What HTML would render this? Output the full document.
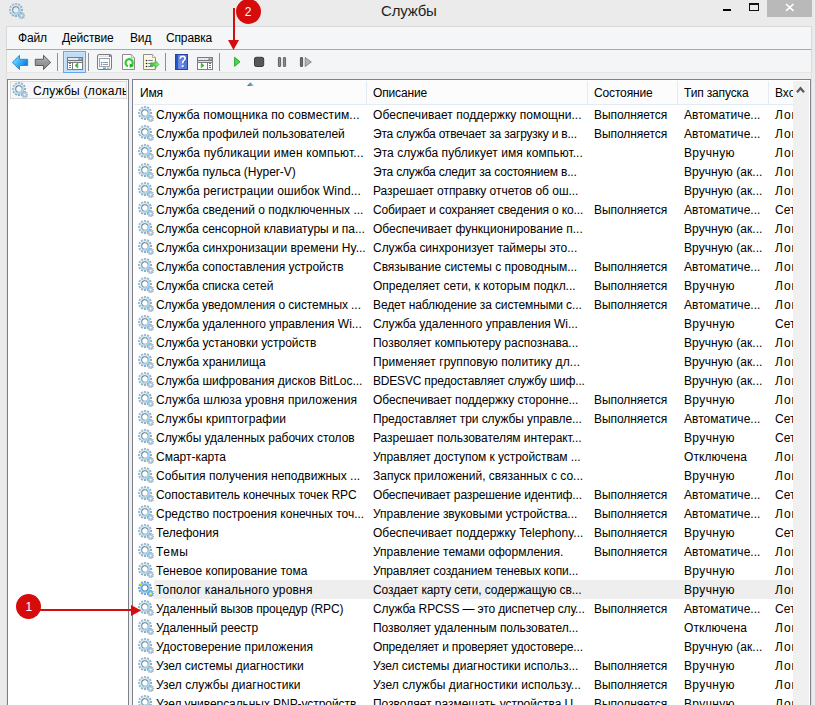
<!DOCTYPE html>
<html><head><meta charset="utf-8">
<style>
* { margin:0; padding:0; box-sizing:border-box; }
html,body { width:815px; height:705px; overflow:hidden; background:#ebebeb; }
body { position:relative; font-family:"Liberation Sans", sans-serif; font-size:12px; color:#000; }
.abs { position:absolute; }
#title { position:absolute; left:381px; top:2px; font-size:15px; color:#1e1e1e; letter-spacing:-0.2px; }
#menubar { position:absolute; left:6px; top:26px; width:806px; height:24px; background:#f5f6f7; border:1px solid #d9d9d9; border-bottom:1px solid #a9aaac; }
.mi { position:absolute; top:4px; letter-spacing:-0.15px; color:#000; }
#toolbar { position:absolute; left:6px; top:50px; width:806px; height:23px; background:#f4f5f7; border-left:1px solid #d9d9d9; border-right:1px solid #d9d9d9; border-bottom:1px solid #e4e5e7; }
#band { position:absolute; left:6px; top:73px; width:806px; height:632px; background:#efefef; border-left:1px solid #e0e0e0; border-right:1px solid #e0e0e0; }
.sep { position:absolute; top:53px; width:1px; height:18px; background:#8e9094; }
#lpane { position:absolute; left:7px; top:79px; width:122px; height:640px; background:#fff; border:1px solid #7b8089; }
#rpane { position:absolute; left:132px; top:79px; width:679px; height:640px; background:#fff; border:1px solid #7b8089; }
#hdr { position:absolute; left:133px; top:80px; width:660px; height:25px; background:#fcfcfd; border-bottom:1px solid #ffffff; }
.hs { position:absolute; top:81px; width:1px; height:23px; background:#e3ebf5; }
.ht { position:absolute; top:86px; letter-spacing:-0.15px; color:#000; }
#vsb { position:absolute; left:793px; top:81px; width:16px; height:625px; background:#f0f0f0; }
.row { position:absolute; left:133px; width:660px; height:19px; overflow:hidden; white-space:nowrap; }
.row.hov { background:transparent; }
.row.hov::before { content:""; position:absolute; left:21px; top:0; width:639px; height:19px; background:#eeeeee; }
.row span { position:absolute; top:3px; transform-origin:0 0; }
.gi { position:absolute; left:5px; top:1px; }
.c1 { left:23px; }
.c2 { left:240px; }
.c3 { left:461px; }
.c4 { left:551px; }
.c5 { left:642px; letter-spacing:1px; }
#hdrline { position:absolute; left:134px; top:104px; width:659px; height:1px; background:#e3ebf5; }
</style></head><body>

<svg width="0" height="0" style="position:absolute">
<defs>
<linearGradient id="gb" x1="0" y1="0" x2="1" y2="1">
<stop offset="0" stop-color="#e4f4fb"/>
<stop offset="0.5" stop-color="#c6e9f7"/>
<stop offset="1" stop-color="#8cc3ea"/>
</linearGradient>
<linearGradient id="gr" x1="0" y1="0" x2="1" y2="1">
<stop offset="0" stop-color="#5f6a75"/>
<stop offset="0.6" stop-color="#8a97a3"/>
<stop offset="1" stop-color="#c4dbe8"/>
</linearGradient>
<linearGradient id="gt" x1="0" y1="0" x2="1" y2="1">
<stop offset="0" stop-color="#a9c3d6"/>
<stop offset="1" stop-color="#7fa3c0"/>
</linearGradient>
<mask id="gm" maskUnits="userSpaceOnUse" x="0" y="0" width="16" height="16"><rect width="16" height="16" fill="#fff"/><circle cx="6.9" cy="6.9" r="2.5" fill="#000"/><circle cx="12.6" cy="12.6" r="0.9" fill="#000"/></mask>
<symbol id="gear" viewBox="0 0 16 16">
<g mask="url(#gm)">
<path d="M12.20,5.95 L14.01,5.89 L14.01,8.11 L12.20,8.05 L12.02,8.69 L13.63,9.54 L12.52,11.47 L10.98,10.50 L10.50,10.98 L11.47,12.52 L9.54,13.63 L8.69,12.02 L8.05,12.20 L8.11,14.01 L5.89,14.01 L5.95,12.20 L5.31,12.02 L4.46,13.63 L2.53,12.52 L3.50,10.98 L3.02,10.50 L1.48,11.47 L0.37,9.54 L1.98,8.69 L1.80,8.05 L-0.01,8.11 L-0.01,5.89 L1.80,5.95 L1.98,5.31 L0.37,4.46 L1.48,2.53 L3.02,3.50 L3.50,3.02 L2.53,1.48 L4.46,0.37 L5.31,1.98 L5.95,1.80 L5.89,-0.01 L8.11,-0.01 L8.05,1.80 L8.69,1.98 L9.54,0.37 L11.47,1.48 L10.50,3.02 L10.98,3.50 L12.52,2.53 L13.63,4.46 L12.02,5.31 Z" fill="url(#gt)"/>
<circle cx="7" cy="7" r="5.3" fill="url(#gb)"/>
<circle cx="6.9" cy="6.9" r="3.1" fill="none" stroke="url(#gr)" stroke-width="1.1"/>
<path d="M15.11,11.92 L16.13,11.91 L16.13,13.29 L15.11,13.28 L14.96,13.69 L15.75,14.35 L14.87,15.40 L14.08,14.73 L13.71,14.95 L13.89,15.96 L12.54,16.20 L12.36,15.19 L11.94,15.11 L11.43,16.00 L10.24,15.32 L10.76,14.43 L10.48,14.10 L9.51,14.45 L9.04,13.16 L10.01,12.82 L10.01,12.38 L9.04,12.04 L9.51,10.75 L10.48,11.10 L10.76,10.77 L10.24,9.88 L11.43,9.20 L11.94,10.09 L12.36,10.01 L12.54,9.00 L13.89,9.24 L13.71,10.25 L14.08,10.47 L14.87,9.80 L15.75,10.85 L14.96,11.51 Z" fill="#98b6cc"/>
<circle cx="12.6" cy="12.6" r="2.1" fill="#cde3ef"/>
<circle cx="12.6" cy="12.6" r="1.3" fill="none" stroke="#8ea9bd" stroke-width="0.6"/>
</g>
</symbol>
<symbol id="gearh" viewBox="0 0 16 16">
<path d="M12.20,5.95 L14.01,5.89 L14.01,8.11 L12.20,8.05 L12.02,8.69 L13.63,9.54 L12.52,11.47 L10.98,10.50 L10.50,10.98 L11.47,12.52 L9.54,13.63 L8.69,12.02 L8.05,12.20 L8.11,14.01 L5.89,14.01 L5.95,12.20 L5.31,12.02 L4.46,13.63 L2.53,12.52 L3.50,10.98 L3.02,10.50 L1.48,11.47 L0.37,9.54 L1.98,8.69 L1.80,8.05 L-0.01,8.11 L-0.01,5.89 L1.80,5.95 L1.98,5.31 L0.37,4.46 L1.48,2.53 L3.02,3.50 L3.50,3.02 L2.53,1.48 L4.46,0.37 L5.31,1.98 L5.95,1.80 L5.89,-0.01 L8.11,-0.01 L8.05,1.80 L8.69,1.98 L9.54,0.37 L11.47,1.48 L10.50,3.02 L10.98,3.50 L12.52,2.53 L13.63,4.46 L12.02,5.31 Z" fill="#6ea7da"/>
<circle cx="7" cy="7" r="5.3" fill="#9fd2f4"/>
<circle cx="6.9" cy="6.9" r="3.1" fill="none" stroke="#5f95c4" stroke-width="1.2"/>
<circle cx="6.9" cy="6.9" r="2.4" fill="#ffffff"/>
<path d="M15.11,11.92 L16.13,11.91 L16.13,13.29 L15.11,13.28 L14.96,13.69 L15.75,14.35 L14.87,15.40 L14.08,14.73 L13.71,14.95 L13.89,15.96 L12.54,16.20 L12.36,15.19 L11.94,15.11 L11.43,16.00 L10.24,15.32 L10.76,14.43 L10.48,14.10 L9.51,14.45 L9.04,13.16 L10.01,12.82 L10.01,12.38 L9.04,12.04 L9.51,10.75 L10.48,11.10 L10.76,10.77 L10.24,9.88 L11.43,9.20 L11.94,10.09 L12.36,10.01 L12.54,9.00 L13.89,9.24 L13.71,10.25 L14.08,10.47 L14.87,9.80 L15.75,10.85 L14.96,11.51 Z" fill="#6aa2d4"/>
<circle cx="12.6" cy="12.6" r="2.2" fill="#8cc4ee"/>
<circle cx="12.6" cy="12.6" r="0.9" fill="#ffffff"/>
<ellipse cx="2.7" cy="3.4" rx="1.1" ry="0.6" fill="#c8e000"/>
<circle cx="10.1" cy="2.8" r="0.6" fill="#c8e000"/>
<circle cx="7.4" cy="9.5" r="0.6" fill="#c8e000"/>
<circle cx="12.4" cy="13.4" r="0.6" fill="#c8e000"/>
</symbol>
</defs>
</svg>
<!-- title bar -->
<svg class="abs" style="left:9px;top:3px" width="16" height="16"><use href="#gear"/></svg>
<div id="title">Службы</div>
<div class="abs" style="left:723px;top:9px;width:8px;height:2px;background:#000"></div>
<div class="abs" style="left:749px;top:3px;width:10px;height:8px;border:1px solid #111;border-top:2px solid #111"></div>
<div class="abs" style="left:767px;top:0;width:45px;height:17px;background:#b9b9b9"></div>
<svg class="abs" style="left:767px;top:0" width="45" height="17"><path d="M19,4 L26.5,10.8 M26.5,4 L19,10.8" stroke="#fff" stroke-width="1.6"/></svg>

<div id="band"></div>
<div id="menubar">
<span class="mi" style="left:11px">Файл</span>
<span class="mi" style="left:55px">Действие</span>
<span class="mi" style="left:123px">Вид</span>
<span class="mi" style="left:159px">Справка</span>
</div>
<div id="toolbar"></div>

<!-- toolbar icons -->
<svg class="abs" style="left:0;top:0" width="330" height="80" viewBox="0 0 330 80">
<defs>
<linearGradient id="ab" x1="0" y1="0" x2="1" y2="0.6"><stop offset="0" stop-color="#9be0ff"/><stop offset="0.45" stop-color="#48c0fb"/><stop offset="1" stop-color="#0f78d6"/></linearGradient>
<linearGradient id="ag" x1="0" y1="0" x2="0" y2="1"><stop offset="0" stop-color="#c4c4c4"/><stop offset="0.5" stop-color="#979797"/><stop offset="1" stop-color="#8a8a8a"/></linearGradient>
<linearGradient id="hb" x1="0" y1="0" x2="1" y2="0"><stop offset="0" stop-color="#7c9ef0"/><stop offset="1" stop-color="#4a72d8"/></linearGradient>
<linearGradient id="gg" x1="0" y1="0" x2="1" y2="0"><stop offset="0" stop-color="#2fbf2f"/><stop offset="1" stop-color="#8ef08e"/></linearGradient>
</defs>
<!-- back -->
<path d="M12.3,62.4 L19.5,55.3 L19.5,59.3 L27.7,59.3 L27.7,65.5 L19.5,65.5 L19.5,69.5 Z" fill="url(#ab)" stroke="#3a8ad0" stroke-width="1" stroke-linejoin="round"/>
<!-- forward -->
<path d="M50.7,62.4 L43.5,55.3 L43.5,59.3 L35.3,59.3 L35.3,65.5 L43.5,65.5 L43.5,69.5 Z" fill="url(#ag)" stroke="#5c5c5c" stroke-width="1" stroke-linejoin="round"/>
<!-- selected button -->
<rect x="63.5" y="51.5" width="22" height="21" fill="#bddcf8" stroke="#66a5e8" stroke-width="1"/>
<rect x="64.5" y="52.5" width="20" height="19" fill="none" stroke="#cde4fa" stroke-width="1"/>
<!-- show/hide console tree icon -->
<rect x="67.5" y="57.5" width="15" height="12" fill="#ffffff" stroke="#7a7c80" stroke-width="1"/>
<rect x="68" y="58" width="14" height="2.2" fill="#e6e8ec"/><rect x="78.5" y="58.2" width="1.2" height="1.8" fill="#6f7782"/><rect x="80.5" y="58.2" width="1.2" height="1.8" fill="#6f7782"/>
<line x1="68" y1="60.5" x2="82" y2="60.5" stroke="#6f7782" stroke-width="1"/>
<rect x="68" y="61" width="14" height="1.3" fill="#dde0e5"/>
<line x1="68" y1="62.5" x2="82" y2="62.5" stroke="#7a7c80" stroke-width="1"/>
<line x1="72.5" y1="63" x2="72.5" y2="69" stroke="#6f7782" stroke-width="1"/>
<path d="M69,63.5 h2 M69,65.5 h2 M69,67.5 h2" stroke="#3d7fc9" stroke-width="1"/>
<path d="M75,65.5 L77.8,63 L77.8,68 Z" fill="#34b834" stroke="#2aa52a" stroke-width="0.6"/>
<!-- properties -->
<rect x="97.5" y="54.5" width="14" height="15" rx="1.5" fill="#fbfbfb" stroke="#7c7c7e" stroke-width="1"/>
<rect x="98.5" y="55.5" width="12" height="1.5" fill="#e2e3e6"/>
<rect x="109" y="55.2" width="1.6" height="1.6" fill="#3f5e9a"/>
<rect x="99.5" y="58.5" width="10" height="8" fill="#ffffff" stroke="#9fa1ad" stroke-width="1"/>
<rect x="103" y="59" width="2" height="1.2" fill="#f4f4f6"/>
<rect x="106" y="59" width="2" height="1.2" fill="#f4f4f6"/>
<circle cx="101.6" cy="62.6" r="0.9" fill="#1fb5f5"/>
<circle cx="101.6" cy="64.6" r="0.8" fill="#8d8d8d"/>
<path d="M103,62.5 h5 M103,64.5 h5" stroke="#9a9a9a" stroke-width="1"/>
<rect x="103" y="67.5" width="3" height="1.7" fill="#22c0f8"/>
<rect x="107" y="67.5" width="2.5" height="1.7" fill="#b8b8b8"/>
<!-- refresh doc -->
<path d="M122.5,54.5 L131.3,54.5 L134.5,57.7 L134.5,69.5 L122.5,69.5 Z" fill="#fcfcfc" stroke="#8c8c8c" stroke-width="1"/>
<path d="M131.3,54.5 L131.3,57.7 L134.5,57.7" fill="#f0f0f0" stroke="#9c9c9c" stroke-width="0.8"/>
<path d="M131.5,65.5 A3.6,3.6 0 1 0 128,66.2" fill="none" stroke="#2ecb2e" stroke-width="2.2"/>
<path d="M129.6,63.5 L134,66 L129.8,67.8 Z" fill="#1cb81c"/>
<!-- export list -->
<path d="M143.5,54.5 L152.5,54.5 L155.5,57.5 L155.5,69.5 L143.5,69.5 Z" fill="#fdf7dc" stroke="#8e8e8e" stroke-width="1"/>
<path d="M152.5,54.5 L152.5,57.5 L155.5,57.5" fill="#f2f2f2" stroke="#a0a0a0" stroke-width="0.8"/>
<circle cx="146.5" cy="60.5" r="0.8" fill="#222"/><circle cx="146.5" cy="63.5" r="0.8" fill="#222"/><circle cx="146.5" cy="66.5" r="0.8" fill="#222"/>
<path d="M148.2,60.5 h4.6 M148.2,63.5 h4.6 M148.2,66.5 h4.6" stroke="#7a76a2" stroke-width="1"/>
<path d="M150.6,62.9 L155.3,62.9 L155.3,60.5 L158.9,64.4 L155.3,68.2 L155.3,65.9 L150.6,65.9 Z" fill="url(#gg)" stroke="#3cb43c" stroke-width="0.8" stroke-linejoin="round"/>
<!-- help book -->
<rect x="175.5" y="54.5" width="12" height="15" fill="url(#hb)" stroke="#2442a6" stroke-width="1"/>
<rect x="175.8" y="54.8" width="2.4" height="14.4" fill="#2c52c4"/>
<path d="M180.3,58.8 Q180.5,56.4 182.7,56.4 Q185.1,56.4 185.1,58.5 Q185.1,59.9 183.5,60.9 Q182.7,61.5 182.7,63.4" fill="none" stroke="#1d3590" stroke-width="1.7" transform="translate(0.6,0.6)" opacity="0.6"/><path d="M180.3,58.8 Q180.5,56.4 182.7,56.4 Q185.1,56.4 185.1,58.5 Q185.1,59.9 183.5,60.9 Q182.7,61.5 182.7,63.4" fill="none" stroke="#ffffff" stroke-width="1.7"/>
<rect x="182.4" y="65.8" width="1.9" height="1.9" fill="#1d3590" opacity="0.6"/><rect x="181.8" y="65.2" width="1.9" height="1.9" fill="#ffffff"/>
<!-- action pane -->
<rect x="197.5" y="57.5" width="15" height="12" fill="#ffffff" stroke="#7a7c80" stroke-width="1"/>
<rect x="198" y="58" width="14" height="2.2" fill="#e6e8ec"/><rect x="208.5" y="58.2" width="1.2" height="1.8" fill="#6f7782"/><rect x="210.5" y="58.2" width="1.2" height="1.8" fill="#6f7782"/>
<line x1="198" y1="60.5" x2="212" y2="60.5" stroke="#6f7782" stroke-width="1"/>
<rect x="198" y="61" width="14" height="1.3" fill="#dde0e5"/>
<line x1="198" y1="62.5" x2="212" y2="62.5" stroke="#7a7c80" stroke-width="1"/>
<line x1="207.5" y1="63" x2="207.5" y2="69" stroke="#6f7782" stroke-width="1"/>
<path d="M209,63.5 h2 M209,65.5 h2 M209,67.5 h2" stroke="#3d7fc9" stroke-width="1"/>
<path d="M201.2,63.2 L204,65.5 L201.2,67.8 Z" fill="#34b834" stroke="#2aa52a" stroke-width="0.6"/>
<!-- play -->
<path d="M234.6,57.3 L240,61.8 L234.6,66.3 Z" fill="#4fd34f" stroke="#22a322" stroke-width="0.9" stroke-linejoin="round"/>
<!-- stop -->
<rect x="254.5" y="57.3" width="9.2" height="9.2" rx="1.8" fill="#575757" stroke="#3a3a3a" stroke-width="1"/>
<!-- pause -->
<rect x="278.4" y="57.5" width="2.2" height="9" rx="0.5" fill="#8a8a8a" stroke="#585858" stroke-width="0.9"/>
<rect x="283.4" y="57.5" width="2.2" height="9" rx="0.5" fill="#8a8a8a" stroke="#5e5e5e" stroke-width="0.9"/>
<!-- restart -->
<rect x="300.4" y="57.5" width="2.2" height="9" rx="0.5" fill="#707070" stroke="#4a4a4a" stroke-width="0.9"/>
<path d="M305.2,57.5 L311.3,62 L305.2,66.5 Z" fill="#b4b4b4" stroke="#7e7e7e" stroke-width="0.9" stroke-linejoin="round"/>
</svg>

<div class="sep" style="left:57px"></div>
<div class="sep" style="left:88px"></div>
<div class="sep" style="left:165px"></div>
<div class="sep" style="left:219px"></div>

<div id="lpane"></div>
<div class="abs" style="left:10px;top:81px;width:117px;height:18px;background:#f7f7f7;border:1px solid #dadada"></div>
<svg class="abs" style="left:12px;top:82px" width="16" height="16"><use href="#gear"/></svg>
<div class="abs" style="left:33px;top:84px;width:93px;overflow:hidden;white-space:nowrap"><span style="letter-spacing:0.25px">Службы (локальные)</span></div>

<div id="rpane"></div>
<div id="hdr"></div><div id="hdrline"></div>
<div class="hs" style="left:366px"></div>
<div class="hs" style="left:587px"></div>
<div class="hs" style="left:677px"></div>
<div class="hs" style="left:768px"></div>
<span class="ht" style="left:140px">Имя</span>
<span class="ht" style="left:373px">Описание</span>
<span class="ht" style="left:594px">Состояние</span>
<span class="ht" style="left:684px">Тип запуска</span>
<div class="abs" style="left:775px;top:86px;width:18px;overflow:hidden;white-space:nowrap">Вход от имени</div>
<svg class="abs" style="left:246px;top:81px" width="10" height="6"><defs><linearGradient id="sa" x1="0" y1="0" x2="1" y2="0"><stop offset="0" stop-color="#2d5a80"/><stop offset="1" stop-color="#9ad4f2"/></linearGradient></defs><path d="M1,5 L4.5,1.3 L8,5 Z" fill="url(#sa)"/></svg>

<div class="row" style="top:105px"><svg class="gi" width="16" height="16"><use href="#gear"/></svg><span class="c1" style="letter-spacing:0.103px">Служба помощника по совместим...</span><span class="c2" style="letter-spacing:0.056px">Обеспечивает поддержку помощни...</span><span class="c3" style="letter-spacing:-0.050px">Выполняется</span><span class="c4" style="letter-spacing:0.042px">Автоматиче...</span><span class="c5">Лок</span></div>
<div class="row" style="top:124px"><svg class="gi" width="16" height="16"><use href="#gear"/></svg><span class="c1" style="letter-spacing:-0.029px">Служба профилей пользователей</span><span class="c2" style="letter-spacing:-0.203px">Эта служба отвечает за загрузку и в...</span><span class="c3" style="letter-spacing:-0.050px">Выполняется</span><span class="c4" style="letter-spacing:0.042px">Автоматиче...</span><span class="c5">Лок</span></div>
<div class="row" style="top:143px"><svg class="gi" width="16" height="16"><use href="#gear"/></svg><span class="c1" style="letter-spacing:0.156px">Служба публикации имен компьют...</span><span class="c2" style="letter-spacing:0.062px">Эта служба публикует имя компьют...</span><span class="c3"></span><span class="c4" style="letter-spacing:0.367px">Вручную</span><span class="c5">Лок</span></div>
<div class="row" style="top:162px"><svg class="gi" width="16" height="16"><use href="#gear"/></svg><span class="c1" style="letter-spacing:-0.014px">Служба пульса (Hyper-V)</span><span class="c2" style="letter-spacing:-0.197px">Эта служба следит за состоянием в...</span><span class="c3"></span><span class="c4" style="letter-spacing:0.054px">Вручную (ак...</span><span class="c5">Лок</span></div>
<div class="row" style="top:181px"><svg class="gi" width="16" height="16"><use href="#gear"/></svg><span class="c1" style="letter-spacing:0.091px">Служба регистрации ошибок Wind...</span><span class="c2" style="letter-spacing:-0.035px">Разрешает отправку отчетов об ош...</span><span class="c3"></span><span class="c4" style="letter-spacing:0.054px">Вручную (ак...</span><span class="c5">Лок</span></div>
<div class="row" style="top:200px"><svg class="gi" width="16" height="16"><use href="#gear"/></svg><span class="c1">Служба сведений о подключенных ...</span><span class="c2" style="letter-spacing:-0.136px">Собирает и сохраняет сведения о ко...</span><span class="c3" style="letter-spacing:-0.050px">Выполняется</span><span class="c4" style="letter-spacing:0.042px">Автоматиче...</span><span class="c5" style="letter-spacing:0">Сет</span></div>
<div class="row" style="top:219px"><svg class="gi" width="16" height="16"><use href="#gear"/></svg><span class="c1" style="letter-spacing:-0.053px">Служба сенсорной клавиатуры и па...</span><span class="c2">Обеспечивает функционирование п...</span><span class="c3"></span><span class="c4" style="letter-spacing:0.054px">Вручную (ак...</span><span class="c5">Лок</span></div>
<div class="row" style="top:238px"><svg class="gi" width="16" height="16"><use href="#gear"/></svg><span class="c1" style="letter-spacing:0.006px">Служба синхронизации времени Hy...</span><span class="c2" style="letter-spacing:-0.027px">Служба синхронизует таймеры это...</span><span class="c3"></span><span class="c4" style="letter-spacing:0.054px">Вручную (ак...</span><span class="c5">Лок</span></div>
<div class="row" style="top:257px"><svg class="gi" width="16" height="16"><use href="#gear"/></svg><span class="c1" style="letter-spacing:-0.045px">Служба сопоставления устройств</span><span class="c2" style="letter-spacing:-0.028px">Связывание системы с проводным...</span><span class="c3" style="letter-spacing:-0.050px">Выполняется</span><span class="c4" style="letter-spacing:0.042px">Автоматиче...</span><span class="c5">Лок</span></div>
<div class="row" style="top:276px"><svg class="gi" width="16" height="16"><use href="#gear"/></svg><span class="c1" style="letter-spacing:-0.050px">Служба списка сетей</span><span class="c2" style="letter-spacing:-0.029px">Определяет сети, к которым подкл...</span><span class="c3" style="letter-spacing:-0.050px">Выполняется</span><span class="c4" style="letter-spacing:0.367px">Вручную</span><span class="c5">Лок</span></div>
<div class="row" style="top:295px"><svg class="gi" width="16" height="16"><use href="#gear"/></svg><span class="c1" style="letter-spacing:-0.079px">Служба уведомления о системных ...</span><span class="c2" style="letter-spacing:-0.124px">Ведет наблюдение за системными с...</span><span class="c3" style="letter-spacing:-0.050px">Выполняется</span><span class="c4" style="letter-spacing:0.042px">Автоматиче...</span><span class="c5">Лок</span></div>
<div class="row" style="top:314px"><svg class="gi" width="16" height="16"><use href="#gear"/></svg><span class="c1" style="letter-spacing:-0.018px">Служба удаленного управления Wi...</span><span class="c2" style="letter-spacing:-0.045px">Служба удаленного управления Wi...</span><span class="c3"></span><span class="c4" style="letter-spacing:0.367px">Вручную</span><span class="c5" style="letter-spacing:0">Сет</span></div>
<div class="row" style="top:333px"><svg class="gi" width="16" height="16"><use href="#gear"/></svg><span class="c1" style="letter-spacing:-0.016px">Служба установки устройств</span><span class="c2" style="letter-spacing:-0.012px">Позволяет компьютеру распознава...</span><span class="c3"></span><span class="c4" style="letter-spacing:0.054px">Вручную (ак...</span><span class="c5">Лок</span></div>
<div class="row" style="top:352px"><svg class="gi" width="16" height="16"><use href="#gear"/></svg><span class="c1" style="letter-spacing:0.007px">Служба хранилища</span><span class="c2" style="letter-spacing:0.100px">Применяет групповую политику дл...</span><span class="c3"></span><span class="c4" style="letter-spacing:0.054px">Вручную (ак...</span><span class="c5">Лок</span></div>
<div class="row" style="top:371px"><svg class="gi" width="16" height="16"><use href="#gear"/></svg><span class="c1" style="letter-spacing:-0.018px">Служба шифрования дисков BitLoc...</span><span class="c2" style="letter-spacing:-0.188px">BDESVC предоставляет службу шиф...</span><span class="c3"></span><span class="c4" style="letter-spacing:0.054px">Вручную (ак...</span><span class="c5">Лок</span></div>
<div class="row" style="top:390px"><svg class="gi" width="16" height="16"><use href="#gear"/></svg><span class="c1" style="letter-spacing:0.107px">Служба шлюза уровня приложения</span><span class="c2" style="letter-spacing:-0.042px">Обеспечивает поддержку сторонне...</span><span class="c3" style="letter-spacing:-0.050px">Выполняется</span><span class="c4" style="letter-spacing:0.367px">Вручную</span><span class="c5">Лок</span></div>
<div class="row" style="top:409px"><svg class="gi" width="16" height="16"><use href="#gear"/></svg><span class="c1" style="letter-spacing:0.167px">Службы криптографии</span><span class="c2" style="letter-spacing:-0.094px">Предоставляет три службы управле...</span><span class="c3" style="letter-spacing:-0.050px">Выполняется</span><span class="c4" style="letter-spacing:0.042px">Автоматиче...</span><span class="c5" style="letter-spacing:0">Сет</span></div>
<div class="row" style="top:428px"><svg class="gi" width="16" height="16"><use href="#gear"/></svg><span class="c1" style="letter-spacing:-0.037px">Службы удаленных рабочих столов</span><span class="c2" style="letter-spacing:-0.047px">Разрешает пользователям интеракт...</span><span class="c3"></span><span class="c4" style="letter-spacing:0.367px">Вручную</span><span class="c5" style="letter-spacing:0">Сет</span></div>
<div class="row" style="top:447px"><svg class="gi" width="16" height="16"><use href="#gear"/></svg><span class="c1" style="letter-spacing:-0.010px">Смарт-карта</span><span class="c2" style="letter-spacing:-0.060px">Управляет доступом к устройствам ...</span><span class="c3"></span><span class="c4" style="letter-spacing:0.100px">Отключена</span><span class="c5">Лок</span></div>
<div class="row" style="top:466px"><svg class="gi" width="16" height="16"><use href="#gear"/></svg><span class="c1" style="letter-spacing:0.009px">События получения неподвижных ...</span><span class="c2">Запуск приложений, связанных с со...</span><span class="c3"></span><span class="c4" style="letter-spacing:0.367px">Вручную</span><span class="c5">Лок</span></div>
<div class="row" style="top:485px"><svg class="gi" width="16" height="16"><use href="#gear"/></svg><span class="c1" style="letter-spacing:-0.052px">Сопоставитель конечных точек RPC</span><span class="c2" style="letter-spacing:-0.127px">Обеспечивает разрешение идентиф...</span><span class="c3" style="letter-spacing:-0.050px">Выполняется</span><span class="c4" style="letter-spacing:0.042px">Автоматиче...</span><span class="c5" style="letter-spacing:0">Сет</span></div>
<div class="row" style="top:504px"><svg class="gi" width="16" height="16"><use href="#gear"/></svg><span class="c1">Средство построения конечных точ...</span><span class="c2" style="letter-spacing:-0.015px">Управление звуковыми устройства...</span><span class="c3" style="letter-spacing:-0.050px">Выполняется</span><span class="c4" style="letter-spacing:0.042px">Автоматиче...</span><span class="c5">Лок</span></div>
<div class="row" style="top:523px"><svg class="gi" width="16" height="16"><use href="#gear"/></svg><span class="c1" style="letter-spacing:-0.038px">Телефония</span><span class="c2" style="letter-spacing:0.032px">Обеспечивает поддержку Telephony...</span><span class="c3" style="letter-spacing:-0.050px">Выполняется</span><span class="c4" style="letter-spacing:0.367px">Вручную</span><span class="c5" style="letter-spacing:0">Сет</span></div>
<div class="row" style="top:542px"><svg class="gi" width="16" height="16"><use href="#gear"/></svg><span class="c1" style="letter-spacing:0.567px">Темы</span><span class="c2">Управление темами оформления.</span><span class="c3" style="letter-spacing:-0.050px">Выполняется</span><span class="c4" style="letter-spacing:0.042px">Автоматиче...</span><span class="c5">Лок</span></div>
<div class="row" style="top:561px"><svg class="gi" width="16" height="16"><use href="#gear"/></svg><span class="c1">Теневое копирование тома</span><span class="c2" style="letter-spacing:-0.129px">Управляет созданием теневых копи...</span><span class="c3"></span><span class="c4" style="letter-spacing:0.367px">Вручную</span><span class="c5">Лок</span></div>
<div class="row hov" style="top:580px"><svg class="gi" width="16" height="16"><use href="#gearh"/></svg><span class="c1" style="letter-spacing:0.167px">Тополог канального уровня</span><span class="c2" style="letter-spacing:-0.106px">Создает карту сети, содержащую св...</span><span class="c3"></span><span class="c4" style="letter-spacing:0.367px">Вручную</span><span class="c5">Лок</span></div>
<div class="row" style="top:599px"><svg class="gi" width="16" height="16"><use href="#gear"/></svg><span class="c1" style="letter-spacing:-0.155px">Удаленный вызов процедур (RPC)</span><span class="c2" style="letter-spacing:-0.138px">Служба RPCSS — это диспетчер слу...</span><span class="c3" style="letter-spacing:-0.050px">Выполняется</span><span class="c4" style="letter-spacing:0.042px">Автоматиче...</span><span class="c5" style="letter-spacing:0">Сет</span></div>
<div class="row" style="top:618px"><svg class="gi" width="16" height="16"><use href="#gear"/></svg><span class="c1" style="letter-spacing:-0.133px">Удаленный реестр</span><span class="c2" style="letter-spacing:-0.073px">Позволяет удаленным пользовател...</span><span class="c3"></span><span class="c4" style="letter-spacing:0.100px">Отключена</span><span class="c5">Лок</span></div>
<div class="row" style="top:637px"><svg class="gi" width="16" height="16"><use href="#gear"/></svg><span class="c1" style="letter-spacing:0.043px">Удостоверение приложения</span><span class="c2" style="letter-spacing:-0.151px">Определяет и проверяет удостовере...</span><span class="c3"></span><span class="c4" style="letter-spacing:0.054px">Вручную (ак...</span><span class="c5">Лок</span></div>
<div class="row" style="top:656px"><svg class="gi" width="16" height="16"><use href="#gear"/></svg><span class="c1" style="letter-spacing:-0.013px">Узел системы диагностики</span><span class="c2" style="letter-spacing:-0.012px">Узел системы диагностики использ...</span><span class="c3" style="letter-spacing:-0.050px">Выполняется</span><span class="c4" style="letter-spacing:0.367px">Вручную</span><span class="c5">Лок</span></div>
<div class="row" style="top:675px"><svg class="gi" width="16" height="16"><use href="#gear"/></svg><span class="c1" style="letter-spacing:0.055px">Узел службы диагностики</span><span class="c2" style="letter-spacing:0.068px">Узел службы диагностики использу...</span><span class="c3" style="letter-spacing:-0.050px">Выполняется</span><span class="c4" style="letter-spacing:0.367px">Вручную</span><span class="c5">Лок</span></div>
<div class="row" style="top:694px"><svg class="gi" width="16" height="16"><use href="#gear"/></svg><span class="c1" style="letter-spacing:-0.065px">Узел универсальных PNP-устройств</span><span class="c2" style="letter-spacing:-0.015px">Позволяет размещать устройства U...</span><span class="c3" style="letter-spacing:-0.050px">Выполняется</span><span class="c4" style="letter-spacing:0.367px">Вручную</span><span class="c5">Лок</span></div>

<div id="vsb"></div>
<svg class="abs" style="left:793px;top:81px" width="17" height="17"><path d="M4,11.2 L7.5,7.2 L11,11.2" fill="none" stroke="#5a5a5a" stroke-width="2.2"/></svg>

<!-- annotations -->
<div class="abs" style="left:233px;top:8px;width:2px;height:34px;background:#d40d0d"></div>
<svg class="abs" style="left:228px;top:39px" width="12" height="12"><path d="M0,1 L11,1 L5.5,11 Z" fill="#d40d0d"/></svg>
<div class="abs" style="left:235.5px;top:-0.7px;width:25px;height:25px;border-radius:50%;background:#d60c0c"></div>
<div class="abs" style="left:235.5px;top:5px;width:25px;text-align:center;color:#fff;font-size:12px">2</div>

<div class="abs" style="left:40px;top:609px;width:93px;height:2px;background:#d40d0d"></div>
<svg class="abs" style="left:130.5px;top:603.7px" width="12" height="13"><path d="M0,1 L10,6.5 L0,12 Z" fill="#d40d0d"/></svg>
<div class="abs" style="left:16.3px;top:594.4px;width:25px;height:25px;border-radius:50%;background:#d60c0c"></div>
<div class="abs" style="left:16.3px;top:600px;width:25px;text-align:center;color:#fff;font-size:12px">1</div>
</body></html>
